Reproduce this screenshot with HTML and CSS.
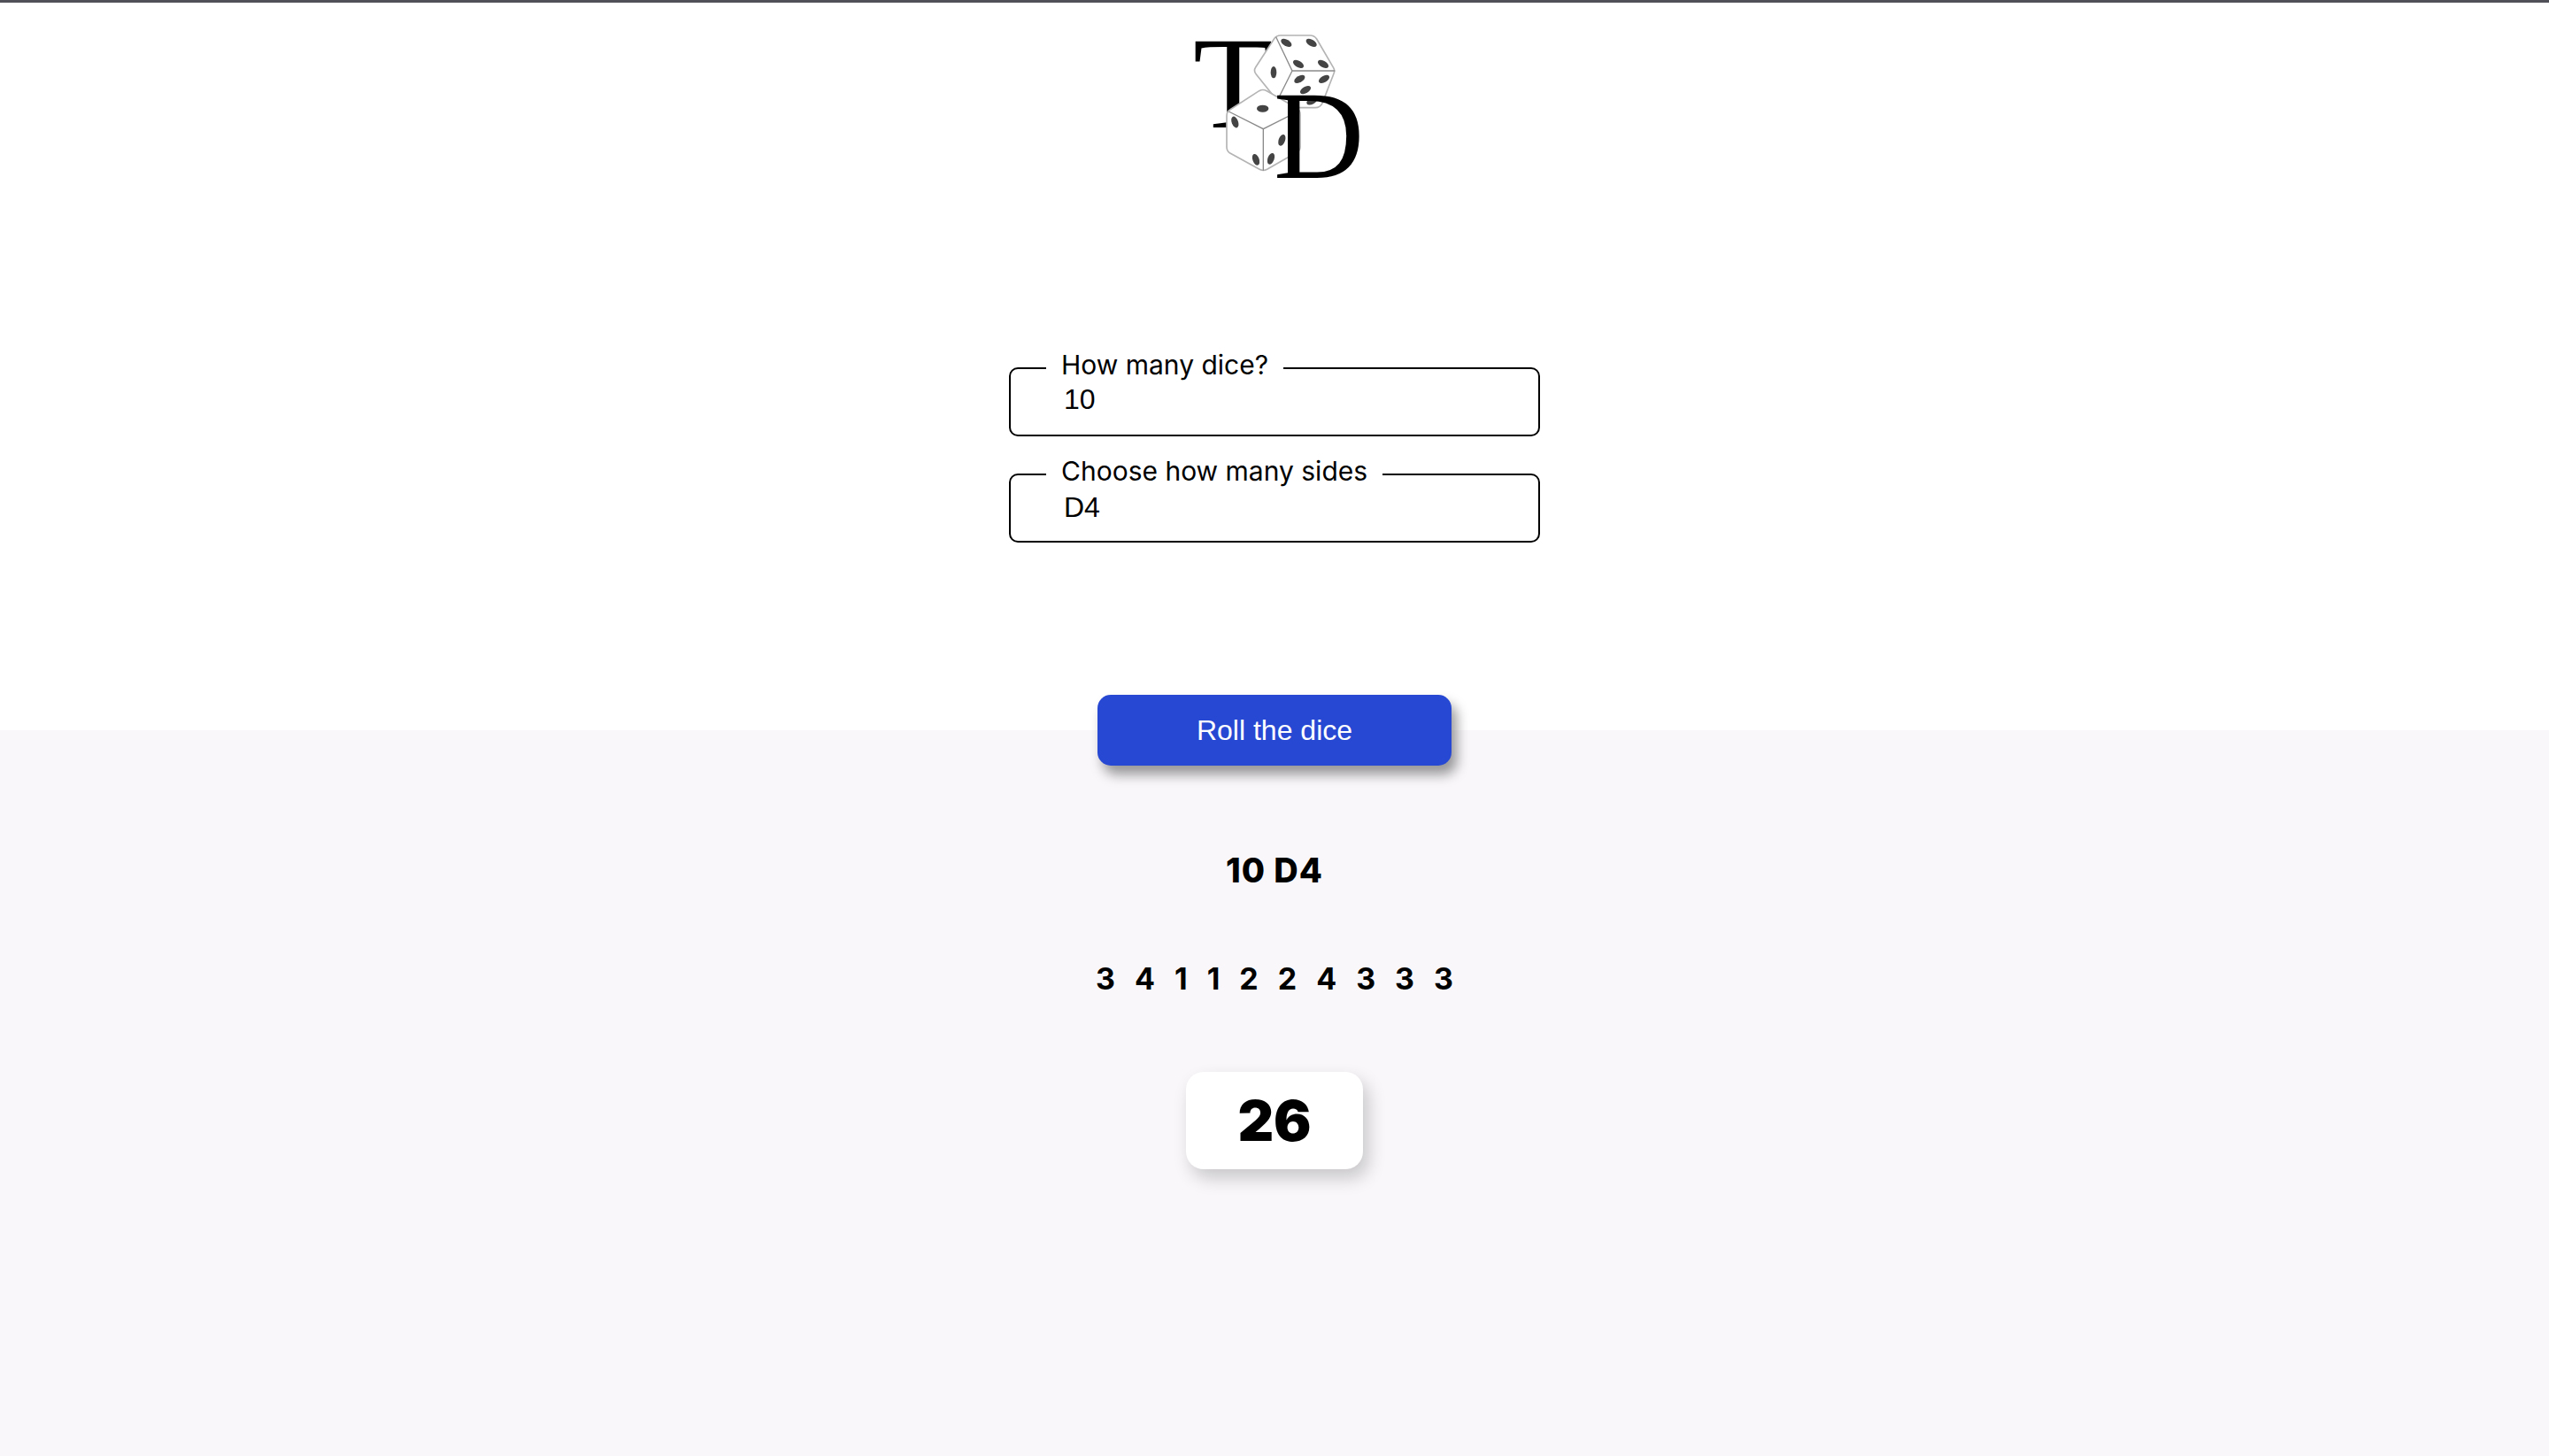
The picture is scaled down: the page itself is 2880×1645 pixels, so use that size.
FILE: index.html
```html
<!DOCTYPE html>
<html>

<head>
    <title>Roll the dice</title>
    <meta charset="UTF-8" />
    <link rel="stylesheet" href="styles.css">
</head>

<body>
    <div class="top">
        <svg class="logo" viewBox="0 9 720 705" width="240" height="235">
            <text class="logo-letter" x="84" y="432" font-size="445">T</text>
            <!-- top die -->
            <path class="die" d="M380 120 H480 Q495 120 503 132 L560 230 Q566 240 560 252 L522 350 Q515 365 498 365 H400 Q385 365 378 352 L298 252 Q288 240 296 228 L360 130 Q367 120 380 120 Z" />
            <path class="die-line" d="M365 125 L420 240 H565 M420 240 L375 330" />
            <g class="pip">
                <ellipse cx="357" cy="245" rx="10" ry="20" />
                <ellipse cx="400" cy="145" rx="20" ry="11" transform="rotate(30 400 145)" />
                <ellipse cx="485" cy="145" rx="20" ry="11" transform="rotate(30 485 145)" />
                <ellipse cx="441" cy="217" rx="20" ry="11" transform="rotate(30 441 217)" />
                <ellipse cx="525" cy="217" rx="20" ry="11" transform="rotate(30 525 217)" />
                <ellipse cx="445" cy="268" rx="20" ry="11" transform="rotate(-30 445 268)" />
                <ellipse cx="528" cy="268" rx="20" ry="11" transform="rotate(-30 528 268)" />
                <ellipse cx="465" cy="305" rx="20" ry="11" transform="rotate(-30 465 305)" />
                <ellipse cx="487" cy="342" rx="20" ry="11" transform="rotate(-30 487 342)" />
            </g>
            <!-- lower die -->
            <path class="die" d="M308 308 Q320 301 334 308 L435 366 Q447 374 447 388 V498 Q447 510 436 516 L335 574 Q322 581 309 574 L208 518 Q198 512 198 498 V392 Q198 378 210 371 Z" />
            <path class="die-line" d="M205 378 L322 437 L445 375 M322 437 V578" />
            <g class="pip">
                <ellipse cx="320" cy="368" rx="20" ry="12" />
                <ellipse cx="226" cy="414" rx="11" ry="20" transform="rotate(-20 226 414)" />
                <ellipse cx="297" cy="541" rx="11" ry="20" transform="rotate(-20 297 541)" />
                <ellipse cx="348" cy="538" rx="11" ry="20" transform="rotate(20 348 538)" />
                <ellipse cx="385" cy="475" rx="11" ry="20" transform="rotate(20 385 475)" />
            </g>
            <text class="logo-letter" x="357" y="603" font-size="425">D</text>
        </svg>

        <form class="dice-form">
            <fieldset class="field">
                <legend>How many dice?</legend>
                <input type="text" id="dice_count" name="dice_count" value="10" />
            </fieldset>
            <fieldset class="field">
                <legend>Choose how many sides</legend>
                <select id="dice_sides" name="dice_sides">
                    <option selected>D4</option>
                    <option>D6</option>
                    <option>D8</option>
                    <option>D10</option>
                    <option>D12</option>
                    <option>D20</option>
                </select>
            </fieldset>
        </form>

        <button class="roll" type="button">Roll the dice</button>
    </div>

    <div class="results">
        <h2 class="roll-name">10 D4</h2>
        <div class="rolls">
            <span>3</span>
            <span>4</span>
            <span>1</span>
            <span>1</span>
            <span>2</span>
            <span>2</span>
            <span>4</span>
            <span>3</span>
            <span>3</span>
            <span>3</span>
        </div>
        <div class="total">26</div>
    </div>
</body>

</html>
```

FILE: styles.css
```css
body {
    font-family: Inter, "Liberation Sans", sans-serif;
    margin: 0;
    padding: 0;
    min-height: 100vh;
    display: flex;
    flex-direction: column;
    color: black;
}

.top {
    background-color: white;
    border-top: 3px solid #505058;
    height: 822px;
    display: flex;
    flex-direction: column;
    align-items: center;
}

.logo {
    display: block;
}

.logo-letter {
    font-family: "Liberation Serif", serif;
    fill: black;
}

.die {
    fill: white;
    stroke: #b4b4b4;
    stroke-width: 5;
}

.die-line {
    fill: none;
    stroke: #8a8a8a;
    stroke-width: 4;
}

.pip {
    fill: #444;
}

.dice-form {
    display: flex;
    flex-direction: column;
    gap: 21px;
    margin-top: 156px;
}

.field {
    width: 600px;
    height: 99px;
    box-sizing: border-box;
    margin: 0;
    padding: 0;
    border: 2px solid black;
    border-radius: 10px;
}

.field legend {
    margin-left: 40px;
    padding: 0 17px 7px;
    font-size: 30px;
    line-height: 36px;
    font-weight: 400;
}

.field input,
.field select {
    display: block;
    width: 100%;
    box-sizing: border-box;
    height: 44px;
    margin-top: -8px;
    padding: 0 0 0 60px;
    border: none;
    outline: none;
    appearance: none;
    background: transparent;
    font-family: "Liberation Sans", Arial, sans-serif;
    font-size: 32px;
    color: black;
}

.field select {
    margin-top: -6px;
}

.roll {
    width: 400px;
    height: 80px;
    margin-top: auto;
    margin-bottom: -40px;
    position: relative;
    border: none;
    border-radius: 15px;
    background-color: #2748d2;
    color: white;
    font-family: "Liberation Sans", Arial, sans-serif;
    font-size: 32px;
    box-shadow: 6px 10px 14px rgba(0, 0, 0, 0.4);
}

.results {
    flex: 1;
    background-color: #f9f7fa;
    display: flex;
    flex-direction: column;
    align-items: center;
}

.roll-name {
    margin: 135px 0 0;
    font-size: 38px;
    line-height: 46px;
    font-weight: 800;
    letter-spacing: 1px;
}

.rolls {
    display: flex;
    gap: 22px;
    margin-top: 77px;
    font-size: 34px;
    line-height: 46px;
    font-weight: 700;
}

.total {
    width: 200px;
    height: 110px;
    margin-top: 82px;
    background-color: white;
    border-radius: 20px;
    display: flex;
    align-items: center;
    justify-content: center;
    font-size: 63px;
    font-weight: 900;
    box-shadow: 6px 10px 20px rgba(0, 0, 0, 0.2);
}
```
